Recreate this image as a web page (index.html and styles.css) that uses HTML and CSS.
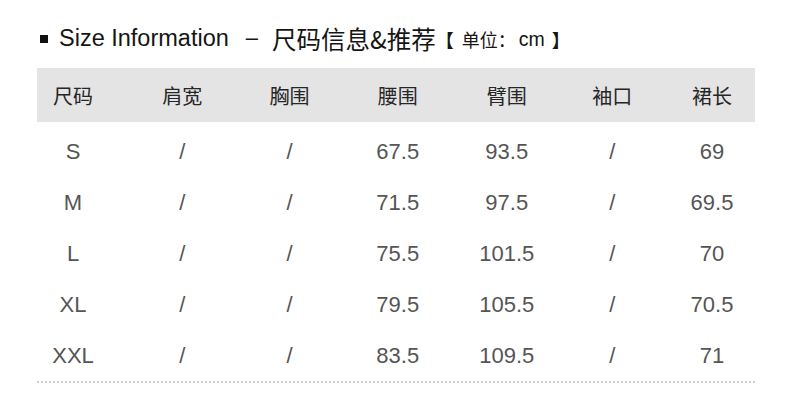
FILE: index.html
```html
<!DOCTYPE html>
<html lang="zh-CN">
<head>
<meta charset="utf-8">
<link rel="stylesheet" href="styles.css">
</head>
<body>
<div class="sheet">
  <h1 class="title">
    <span class="bullet"></span>
    <span class="en">Size Information</span>
    <span class="dash">–</span>
    <span class="cn">尺码信息&amp;推荐</span>
    <span class="unit"><span class="br-l">【</span>单位：<span class="cm">cm</span><span class="br-r">】</span></span>
  </h1>
  <div class="table">
    <div class="band">
      <div class="row head">
        <div>尺码</div><div>肩宽</div><div>胸围</div><div>腰围</div><div>臂围</div><div>袖口</div><div>裙长</div>
      </div>
    </div>
    <div class="body">
      <div class="row"><div>S</div><div>/</div><div>/</div><div>67.5</div><div>93.5</div><div>/</div><div>69</div></div>
      <div class="row"><div>M</div><div>/</div><div>/</div><div>71.5</div><div>97.5</div><div>/</div><div>69.5</div></div>
      <div class="row"><div>L</div><div>/</div><div>/</div><div>75.5</div><div>101.5</div><div>/</div><div>70</div></div>
      <div class="row"><div>XL</div><div>/</div><div>/</div><div>79.5</div><div>105.5</div><div>/</div><div>70.5</div></div>
      <div class="row"><div>XXL</div><div>/</div><div>/</div><div>83.5</div><div>109.5</div><div>/</div><div>71</div></div>
    </div>
    <div class="rule"></div>
  </div>
</div>
</body>
</html>
```

FILE: styles.css
```css
* { box-sizing: border-box; }
html, body { margin: 0; padding: 0; background: #fff; }
body {
  width: 790px;
  height: 411px;
  overflow: hidden;
  font-family: "Liberation Sans", "Noto Sans CJK SC", sans-serif;
}
.title {
  margin: 0;
  height: 68px;
  padding: 8px 0 0 40px;
  display: flex;
  align-items: center;
  font-weight: normal;
  color: #151515;
  white-space: nowrap;
}
.bullet {
  width: 8px;
  height: 8px;
  background: #111;
  margin-right: 11px;
  margin-top: 1px;
}
.en {
  font-family: "Liberation Sans", sans-serif;
  font-size: 23.5px;
}
.dash {
  font-family: "Liberation Sans", sans-serif;
  font-size: 22px;
  margin: 0 14px 0 17px;
}
.cn {
  font-family: "Noto Sans CJK SC", sans-serif;
  font-size: 24.5px;
}
.unit {
  display: flex;
  align-items: center;
  font-family: "Liberation Sans", "Noto Sans CJK SC", sans-serif;
  font-size: 18px;
  margin-left: 0;
  margin-top: 2px;
}
.br-l { margin-right: 8px; font-weight: bold; }
.br-r { margin-left: 7px; font-weight: bold; }
.cm { font-size: 19.5px; margin-left: 3px; }
.table {
  margin-left: 37px;
  width: 718px;
}
.band {
  background: #e4e4e4;
  height: 54px;
  padding-top: 1px;
}
.row {
  display: grid;
  grid-template-columns: 111px 107.5px 107px 109.5px 108.5px 102.5px 97px;
  margin-left: -19.5px;
  margin-right: -5.5px;
  text-align: center;
}
.head {
  font-family: "Noto Sans CJK SC", sans-serif;
  font-size: 20px;
  line-height: 53px;
  color: #262626;
}
.body {
  padding-top: 4px;
  font-size: 22px;
  color: #555;
}
.body .row {
  line-height: 51px;
}
.rule {
  height: 2px;
  background: repeating-linear-gradient(to right, #cfcfcf 0 2px, transparent 2px 4px);
}
```
